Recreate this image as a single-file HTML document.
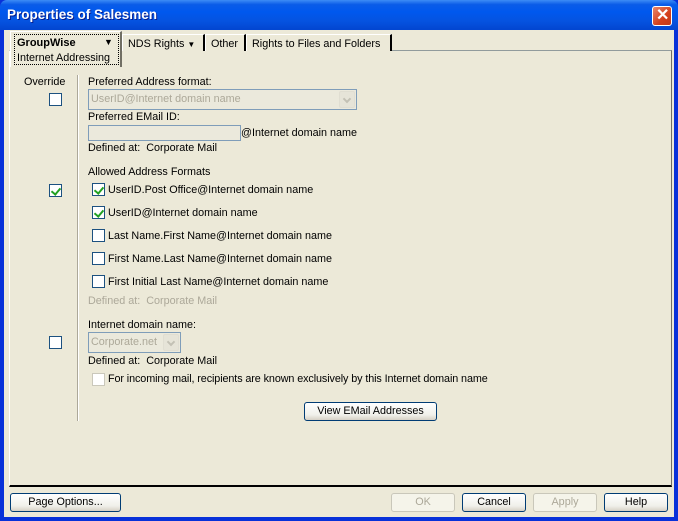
<!DOCTYPE html>
<html><head><style>
*{box-sizing:border-box;margin:0;padding:0}
body{width:678px;height:521px;overflow:hidden;background:#0831d9;font-family:"Liberation Sans",Tahoma,sans-serif;font-size:10.8px;color:#000;position:relative}
.a{position:absolute;white-space:nowrap}
#title{left:0;top:0;width:678px;height:30px;background:linear-gradient(#3d8cf5,#0a5ce8 15%,#0058ee 40%,#0553e0 70%,#0245d0);border-radius:7px 7px 0 0}
#body{left:4px;top:30px;width:670px;height:487px;background:#ece9d8}
.panel{left:9px;top:50px;width:663px;height:437px;border:1px solid #fff;border-right:1px solid #716f64;border-bottom:2px solid #000;border-top:1px solid #919b9c;background:#ece9d8}
.tab{top:34px;height:17px;border:1px solid #fff;border-bottom:none;background:#ece9d8;padding:3px 6px 0 5px;border-right:2px solid #000}
.cb{width:13px;height:13px;border:1px solid #1c5180;background:#fff}
.cb.dis{border-color:#cac8bb}
.chk::after{content:"";position:absolute;left:3px;top:1px;width:4px;height:7px;border:solid #21a121;border-width:0 2px 2px 0;transform:rotate(40deg)}
.btn{height:19px;border:1px solid #003c74;border-radius:3px;background:linear-gradient(#fff,#f0f0ea 70%,#d6d0c5);text-align:center;line-height:17px}
.btn.dis{border-color:#c9c7ba;color:#aca899;background:#f5f4ea}
.gray{color:#aca899}
.combo{border:1px solid #7f9db9;background:#ebe9dc;color:#aca899;padding:3px 2px;height:21px}
.arr{position:absolute;right:1px;top:1px;width:16px;height:17px;background:#e6e4d8;border:1px solid #e0ded2;border-radius:2px}
.arr::after{content:"";position:absolute;left:4px;top:4px;width:4px;height:4px;border:solid #c3c1b5;border-width:0 2px 2px 0;transform:rotate(45deg)}
</style></head><body>
<div class="a" id="title"></div>
<div class="a" style="left:7px;top:7px;color:#fff;font-weight:bold;font-size:13.5px;text-shadow:1px 1px #0a1e8c">Properties of Salesmen</div>
<div class="a" style="left:652px;top:6px;width:20px;height:20px;border:1px solid #fff;border-radius:3px;background:linear-gradient(135deg,#e8866a,#d4401c 60%,#c0391a)"></div>
<div class="a" style="left:656px;top:5px;color:#fff;font-size:16px;font-weight:bold">✕</div>
<div class="a" id="body"></div>
<div class="a panel"></div>
<div class="a tab" style="left:122px;width:83px">NDS Rights <span style="font-size:8px">▼</span></div>
<div class="a tab" style="left:205px;width:41px">Other</div>
<div class="a tab" style="left:246px;width:146px">Rights to Files and Folders</div>
<div class="a" style="left:10px;top:31px;width:112px;height:36px;background:#ece9d8;border:1px solid #fff;border-right:2px solid #716f64;border-bottom:none"></div>
<div class="a" style="left:14px;top:34px;width:105px;height:31px;border:1px dotted #000"></div>
<div class="a" style="left:17px;top:37px;font-weight:bold;font-size:11px">GroupWise</div>
<div class="a" style="left:104px;top:37px;font-size:9px">▼</div>
<div class="a" style="left:17px;top:52px">Internet Addressing</div>

<div class="a" style="left:24px;top:76px">Override</div>
<div class="a" style="left:77px;top:75px;width:2px;height:346px;background:#aca899;border-right:1px solid #fff"></div>
<div class="a cb" style="left:49px;top:93px"></div>
<div class="a cb chk" style="left:49px;top:184px"></div>
<div class="a cb" style="left:49px;top:336px"></div>

<div class="a" style="left:88px;top:76px">Preferred Address format:</div>
<div class="a combo" style="left:88px;top:89px;width:269px">UserID@Internet domain name<div class="arr"></div></div>
<div class="a" style="left:88px;top:111px">Preferred EMail ID:</div>
<div class="a" style="left:88px;top:125px;width:153px;height:16px;border:1px solid #7f9db9;background:#ebe9dc"></div>
<div class="a" style="left:241px;top:127px">@Internet domain name</div>
<div class="a" style="left:88px;top:142px">Defined at:&nbsp; Corporate Mail</div>
<div class="a" style="left:88px;top:166px">Allowed Address Formats</div>
<div class="a cb chk" style="left:92px;top:183px"></div><div class="a" style="left:108px;top:184px">UserID.Post Office@Internet domain name</div>
<div class="a cb chk" style="left:92px;top:206px"></div><div class="a" style="left:108px;top:207px">UserID@Internet domain name</div>
<div class="a cb" style="left:92px;top:229px"></div><div class="a" style="left:108px;top:230px">Last Name.First Name@Internet domain name</div>
<div class="a cb" style="left:92px;top:252px"></div><div class="a" style="left:108px;top:253px">First Name.Last Name@Internet domain name</div>
<div class="a cb" style="left:92px;top:275px"></div><div class="a" style="left:108px;top:276px">First Initial Last Name@Internet domain name</div>
<div class="a gray" style="left:88px;top:295px">Defined at:&nbsp; Corporate Mail</div>
<div class="a" style="left:88px;top:319px">Internet domain name:</div>
<div class="a combo" style="left:88px;top:332px;width:93px">Corporate.net<div class="arr"></div></div>
<div class="a" style="left:88px;top:355px">Defined at:&nbsp; Corporate Mail</div>
<div class="a cb dis" style="left:92px;top:373px"></div><div class="a" style="left:108px;top:373px;letter-spacing:-0.1px">For incoming mail, recipients are known exclusively by this Internet domain name</div>
<div class="a btn" style="left:304px;top:402px;width:133px">View EMail Addresses</div>

<div class="a btn" style="left:10px;top:493px;width:111px">Page Options...</div>
<div class="a btn dis" style="left:391px;top:493px;width:64px">OK</div>
<div class="a btn" style="left:462px;top:493px;width:64px">Cancel</div>
<div class="a btn dis" style="left:533px;top:493px;width:64px">Apply</div>
<div class="a btn" style="left:604px;top:493px;width:64px">Help</div>
</body></html>
